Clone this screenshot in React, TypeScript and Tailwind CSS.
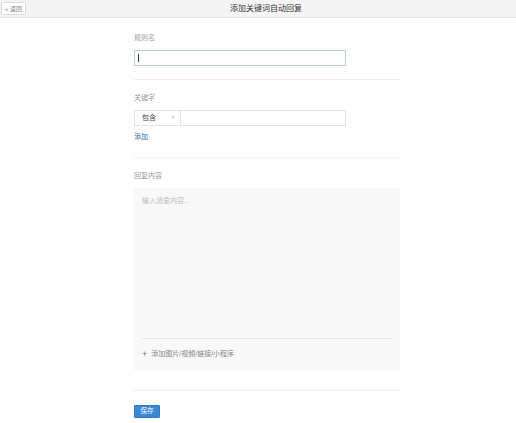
const font = { fontFamily: '"Liberation Sans", "Noto Sans CJK SC", sans-serif' };

export default function App() {
  return (
    <div className="min-h-screen bg-white text-[#333]" style={font}>
      <header className="relative h-[18px] bg-[#f4f4f4] border-b border-[#e8e8e8] flex items-center justify-center">
        <button className="absolute left-[1px] top-[2px] h-[13px] px-[3px] bg-white border border-[#dcdcdc] rounded-[1px] text-[6px] leading-none text-[#888] flex items-center">
          « 返回
        </button>
        <h1 className="text-[8px] leading-none text-[#333] ml-[16px]">添加关键词自动回复</h1>
      </header>

      <main className="ml-[134px] w-[266px]">
        <section className="pt-[15px] pb-[13px] border-b border-[#eeeeee]">
          <div className="h-[10px] text-[7px] leading-[10px] text-[#999]">规则名</div>
          <div className="mt-[7px] w-[212px] h-[16px] border border-[#b6cde6] bg-white flex items-center px-[3px]">
            <span className="w-px h-[8px] bg-[#333]" />
          </div>
        </section>

        <section className="pt-[13px] pb-[15px] border-b border-[#eeeeee]">
          <div className="h-[10px] text-[7px] leading-[10px] text-[#999]">关键字</div>
          <div className="mt-[7px] w-[212px] h-[16px] border border-[#e2e2e2] bg-white flex">
            <div className="w-[46px] border-r border-[#e2e2e2] flex items-center justify-between pl-[7px] pr-[5px]">
              <span className="text-[7px] text-[#444]">包含</span>
              <span className="text-[4px] text-[#aaa]">▼</span>
            </div>
            <div className="flex-1" />
          </div>
          <div className="mt-[6px] h-[10px] text-[7px] leading-[10px] text-[#2b6cb0]">添加</div>
        </section>

        <section className="pt-[13px] pb-[20px] border-b border-[#eeeeee]">
          <div className="h-[10px] text-[7px] leading-[10px] text-[#999]">回复内容</div>
          <div className="mt-[7px] h-[182px] bg-[#f8f8f8] flex flex-col px-[8px]">
            <div className="pt-[8px] h-[10px] box-content text-[7px] leading-[10px] text-[#bbb]">输入消息内容...</div>
            <div className="flex-1" />
            <div className="border-t border-[#e6e6e6] h-[32px] flex items-center gap-[4px] text-[7px] text-[#888]">
              <span className="text-[9px] leading-none text-[#777]">+</span>
              <span>添加图片/视频/链接/小程序</span>
            </div>
          </div>
        </section>

        <section className="pt-[14px]">
          <button className="h-[13px] w-[26px] bg-[#3b87d4] border border-[#2f78c2] rounded-[1px] text-[6.5px] leading-none text-white flex items-center justify-center">
            保存
          </button>
        </section>
      </main>
    </div>
  );
}
